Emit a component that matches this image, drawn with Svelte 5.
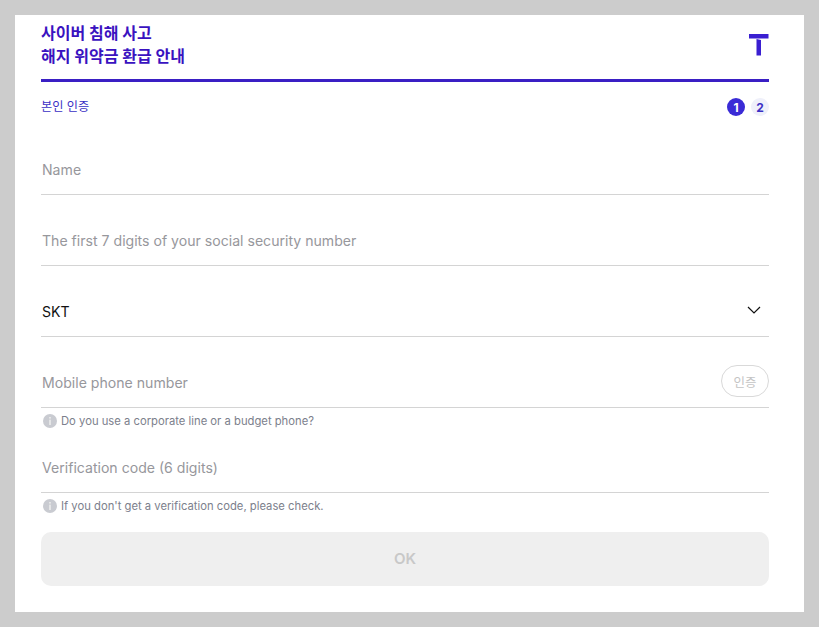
<script>
  const fields = [
    { placeholder: 'Name' },
    { placeholder: 'The first 7 digits of your social security number' }
  ];
</script>

<div class="page">
  <main class="card">
    <header class="head">
      <h1>사이버 침해 사고<br />해지 위약금 환급 안내</h1>
      <svg class="logo" width="20" height="22" viewBox="0 0 20 22" aria-hidden="true">
        <path d="M0 0H19.500V4.500H0Z M7.500 5L12 6V21.500H7.500Z" fill="#3a1fd1" />
      </svg>
    </header>

    <div class="steps">
      <span class="step-label">본인 인증</span>
      <div class="badges">
        <span class="badge active">1</span>
        <span class="badge">2</span>
      </div>
    </div>

    <form class="form" on:submit|preventDefault>
      {#each fields as f}
        <label class="field">
          <input type="text" placeholder={f.placeholder} />
        </label>
      {/each}

      <div class="field">
        <span class="value">SKT</span>
        <svg class="chev" width="14" height="9" viewBox="0 0 14 9" aria-hidden="true">
          <path d="M1 1L7 7L13 1" fill="none" stroke="#111" stroke-width="1.200" />
        </svg>
      </div>

      <div class="field">
        <input type="text" placeholder="Mobile phone number" />
        <button type="button" class="verify" disabled>인증</button>
      </div>
      <p class="hint">
        <svg width="14" height="14" viewBox="0 0 14 14" aria-hidden="true">
          <circle cx="7" cy="7" r="7" fill="#c9cbd1" />
          <rect x="6.200" y="3" width="1.600" height="1.600" fill="#eceded" />
          <rect x="6.200" y="5.600" width="1.600" height="5.400" fill="#eceded" />
        </svg>
        Do you use a corporate line or a budget phone?
      </p>

      <div class="field short">
        <input type="text" placeholder="Verification code (6 digits)" />
      </div>
      <p class="hint">
        <svg width="14" height="14" viewBox="0 0 14 14" aria-hidden="true">
          <circle cx="7" cy="7" r="7" fill="#c9cbd1" />
          <rect x="6.200" y="3" width="1.600" height="1.600" fill="#eceded" />
          <rect x="6.200" y="5.600" width="1.600" height="5.400" fill="#eceded" />
        </svg>
        If you don't get a verification code, please check.
      </p>

      <button type="submit" class="ok" disabled>OK</button>
    </form>
  </main>
</div>

<style>
  :global(body) {
    margin: 0;
    background: #cccccc;
  }
  .page {
    padding: 15px;
    font-family: Inter, "Noto Sans CJK KR", sans-serif;
  }
  .card {
    width: 789px;
    height: 597px;
    box-sizing: border-box;
    padding: 7px 35px 0 26px;
    background: #fff;
  }
  .head {
    display: flex;
    justify-content: space-between;
    align-items: flex-start;
    height: 57px;
    border-bottom: 3px solid #3a1fc4;
  }
  h1 {
    margin: 0;
    font-size: 16px;
    line-height: 23px;
    font-weight: 700;
    color: #3a12c0;
  }
  .logo {
    margin-top: 12px;
  }
  .steps {
    display: flex;
    justify-content: space-between;
    align-items: flex-start;
    height: 18px;
    padding-top: 16px;
  }
  .step-label {
    margin-top: 1px;
    font-size: 12.2px;
    line-height: 16px;
    color: #3a2fc4;
  }
  .badges {
    display: flex;
    gap: 6px;
  }
  .badge {
    width: 18px;
    height: 18px;
    border-radius: 50%;
    display: flex;
    align-items: center;
    justify-content: center;
    font-size: 12px;
    font-weight: 700;
    background: #eff0fa;
    color: #3a2fc4;
  }
  .badge.active {
    background: #3a2bd6;
    color: #fff;
  }
  .form {
    display: flex;
    flex-direction: column;
    padding-top: 8px;
  }
  .field {
    display: flex;
    align-items: center;
    justify-content: space-between;
    box-sizing: border-box;
    height: 71px;
    padding: 20px 0 0 1px;
    border-bottom: 1px solid #d4d4d4;
  }
  .field.short {
    height: 58px;
    padding-top: 7px;
  }
  input {
    flex: 1;
    min-width: 0;
    border: 0;
    outline: 0;
    padding: 0;
    background: none;
    font: inherit;
    font-size: 14.1px;
    color: #111;
  }
  input::placeholder {
    color: #97979c;
    opacity: 1;
  }
  .value {
    font-size: 14.1px;
    color: #111;
  }
  .chev {
    margin-right: 8px;
    margin-bottom: 2px;
  }
  .verify {
    width: 48px;
    height: 32px;
    box-sizing: border-box;
    margin-bottom: 2px;
    border: 1px solid #d9d9d9;
    border-radius: 16px;
    background: #fff;
    font: inherit;
    font-size: 12.5px;
    color: #c4c4c4;
    padding: 0;
  }
  .hint {
    display: flex;
    align-items: center;
    gap: 4px;
    box-sizing: border-box;
    margin: 0;
    padding: 0 0 1px 2px;
    height: 27px;
    font-size: 11.25px;
    color: #7c808c;
  }
  .ok {
    height: 54px;
    margin-top: 12px;
    padding: 0 0 2px;
    border: 0;
    border-radius: 10px;
    background: #efefef;
    font: inherit;
    font-size: 15px;
    font-weight: 600;
    color: #c8c8c8;
  }
</style>
